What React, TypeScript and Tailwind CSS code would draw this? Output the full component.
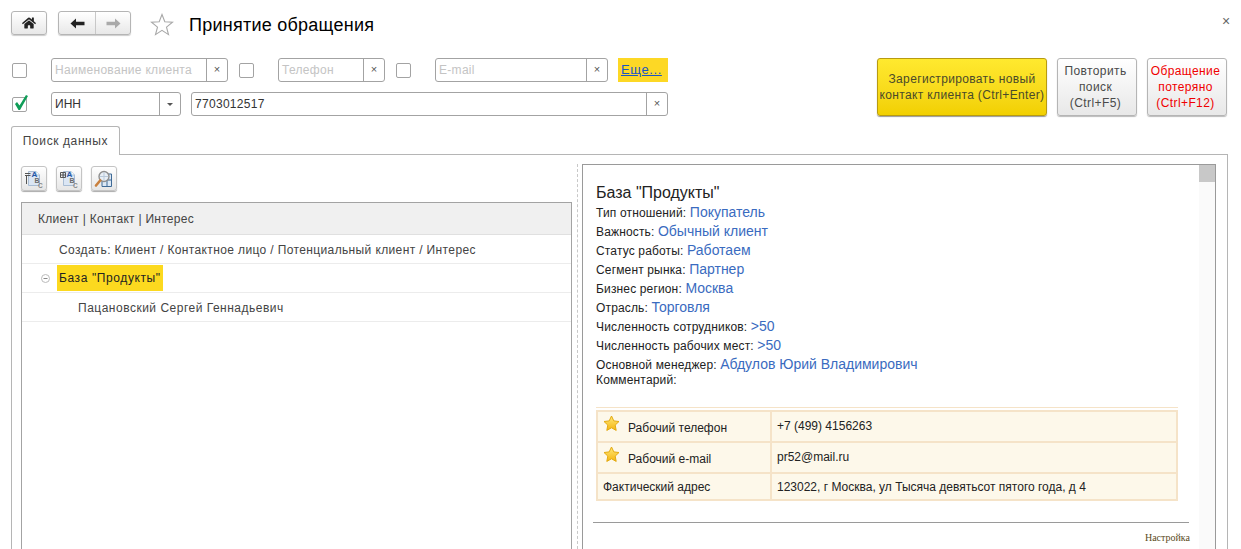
import { ReactNode } from "react";
import { FaHome } from "react-icons/fa";

const field = "flex h-[24px] items-center rounded-[3px] border border-[#a3a3a3] bg-white";

function Check({ checked = false }: { checked?: boolean }) {
  return (
    <div className="relative h-[15px] w-[15px] shrink-0 rounded-[2px] border border-[#a3a3a3] bg-white">
      {checked && (
        <svg className="absolute -left-[1px] -top-[5px]" width="18" height="19" viewBox="0 0 18 19">
          <path d="M3 11 L5 9 L7.5 12.5 L14 2 L16 3 L8 17 L6.5 17 Z" fill="#0f9d58" />
        </svg>
      )}
    </div>
  );
}

function ClearField({ width, placeholder, value }: { width: string; placeholder?: string; value?: string }) {
  return (
    <div className={`${field} ${width}`}>
      <div className={`flex-1 truncate pl-[3px] text-[12px] tracking-[0.3px] ${value ? "text-[#333]" : "text-[#c4c4c4]"}`}>
        {value ?? placeholder}
      </div>
      <div className="flex h-full w-[21px] items-center justify-center border-l border-[#a3a3a3] pb-[1px] text-[11px] text-[#555]">
        ×
      </div>
    </div>
  );
}

function SideButton({ children, red }: { children: ReactNode; red?: boolean }) {
  return (
    <div
      className={`flex h-[58px] w-[80px] items-center justify-center rounded-[3px] border border-[#b5b5b5] bg-gradient-to-b from-white to-[#e8e8e8] pr-[3px] text-center text-[12px] leading-[16px] tracking-[0.4px] shadow-[0_1px_1px_#bbb] ${
        red ? "text-[#f00000]" : "text-[#4a4a4a]"
      }`}
    >
      <div>{children}</div>
    </div>
  );
}

function ToolButton({ children }: { children: ReactNode }) {
  return (
    <div className="flex h-[25px] w-[26px] items-center justify-center rounded-[3px] border border-[#c4c4c4] bg-gradient-to-b from-white to-[#e6e6e6] shadow-[0_1px_1px_#aaa]">
      {children}
    </div>
  );
}

function DocIcon({ kind }: { kind: "list" | "grid" }) {
  return (
    <svg width="20" height="20" viewBox="0 0 20 20">
      <path d="M4.5 2.5 H12 L15.5 6 V16.5 H4.5 Z" fill="#dbe6f4" stroke="#a9bdd4" />
      <path d="M12 2.5 V6 H15.5" fill="#fff" stroke="#a9bdd4" />
      {kind === "list" ? (
        <path d="M1 4.5 H6.5 M1 6.5 H6.5 M2.5 6.5 V15" stroke="#555" strokeWidth="1" />
      ) : (
        <path d="M1.5 3.5 H6.5 V8.5 H1.5 Z M4 3.5 V8.5 M1.5 6 H6.5" stroke="#555" strokeWidth="1" fill="none" />
      )}
      <text x="7.5" y="7.5" fontSize="8" fontWeight="700" fill="#1f55a8" fontFamily="Liberation Sans">A</text>
      <text x="10.5" y="13.5" fontSize="7" fontWeight="700" fill="#6a6a6a" fontFamily="Liberation Sans">B</text>
      <text x="14" y="18.5" fontSize="6.5" fontWeight="700" fill="#8a8a8a" fontFamily="Liberation Sans">C</text>
    </svg>
  );
}

function Star() {
  return (
    <svg width="17" height="17" viewBox="0 0 17 17" className="shrink-0">
      <defs>
        <linearGradient id="st" x1="0" y1="0" x2="0" y2="1">
          <stop offset="0" stopColor="#ffe97a" />
          <stop offset="1" stopColor="#f5b50f" />
        </linearGradient>
      </defs>
      <path
        d="M8.5 1 L10.8 5.9 L16 6.5 L12.2 10.1 L13.2 15.4 L8.5 12.8 L3.8 15.4 L4.8 10.1 L1 6.5 L6.2 5.9 Z"
        fill="url(#st)"
        stroke="#e3a90f"
        strokeLinejoin="round"
      />
    </svg>
  );
}

function Info({ label, value }: { label: string; value: string }) {
  return (
    <div className="h-[19px] text-[12px] leading-[19px] tracking-[0.15px] text-[#222]">
      {label} <span className="text-[14px] tracking-normal text-[#3a6bc0]">{value}</span>
    </div>
  );
}

const info = [
  ["Тип отношений:", "Покупатель"],
  ["Важность:", "Обычный клиент"],
  ["Статус работы:", "Работаем"],
  ["Сегмент рынка:", "Партнер"],
  ["Бизнес регион:", "Москва"],
  ["Отрасль:", "Торговля"],
  ["Численность сотрудников:", ">50"],
  ["Численность рабочих мест:", ">50"],
  ["Основной менеджер:", "Абдулов Юрий Владимирович"],
];

const contacts = [
  { label: "Рабочий телефон", value: "+7 (499) 4156263", star: true, h: "h-[29px]", pad: "pb-[2px]" },
  { label: "Рабочий e-mail", value: "pr52@mail.ru", star: true, h: "h-[31px]", pad: "pb-[2px]" },
  { label: "Фактический адрес", value: "123022, г Москва, ул Тысяча девятьсот пятого года, д 4", star: false, h: "h-[27px]", pad: "" },
];

export default function App() {
  return (
    <div
      className="relative flex h-[549px] w-[1241px] flex-col overflow-hidden bg-white text-[#333]"
      style={{ fontFamily: '"Liberation Sans", Arial, sans-serif' }}
    >
      {/* шапка формы */}
      <div className="mt-[11px] flex h-[24px] items-center pl-[11px]">
        <div className="flex h-[24px] w-[36px] items-center justify-center rounded-[3px] border border-[#b5b5b5] bg-gradient-to-b from-white to-[#e8e8e8] shadow-[0_1px_1px_#ccc]">
          <FaHome size={14} color="#222" />
        </div>
        <div className="ml-[11px] flex h-[24px] w-[73px] rounded-[3px] border border-[#b5b5b5] bg-gradient-to-b from-white to-[#e8e8e8] shadow-[0_1px_1px_#ccc]">
          <div className="flex w-[37px] items-center justify-center border-r border-[#c8c8c8]">
            <svg width="15" height="11" viewBox="0 0 15 11">
              <path d="M0.5 5.5 L6 0.5 V3.8 H14.5 V7.2 H6 V10.5 Z" fill="#222" />
            </svg>
          </div>
          <div className="flex flex-1 items-center justify-center">
            <svg width="15" height="11" viewBox="0 0 15 11">
              <path d="M14.5 5.5 L9 0.5 V3.8 H0.5 V7.2 H9 V10.5 Z" fill="#aaa" />
            </svg>
          </div>
        </div>
        <svg className="ml-[19px] mt-[3px]" width="24" height="23" viewBox="0 0 24 23">
          <path
            d="M12 1.5 L14.8 8.8 L22.5 9.2 L16.5 14.1 L18.5 21.6 L12 17.4 L5.5 21.6 L7.5 14.1 L1.5 9.2 L9.2 8.8 Z"
            fill="none"
            stroke="#a8a8a8"
            strokeWidth="1.1"
          />
        </svg>
        <div className="ml-[15px] mt-[4px] text-[18px] tracking-[0.25px] text-black">Принятие обращения</div>
        <div className="absolute left-[1222px] top-[12px] text-[14px] leading-[18px] text-[#666]">×</div>
      </div>

      {/* отбор и команды */}
      <div className="mt-[23px] flex pl-[12px] pr-[14px]">
        <div className="flex w-[656px] flex-col gap-[10px]">
          <div className="flex h-[24px] items-center">
            <Check />
            <div className="ml-[24px]">
              <ClearField width="w-[177px]" placeholder="Наименование клиента" />
            </div>
            <div className="ml-[11px]">
              <Check />
            </div>
            <div className="ml-[24px]">
              <ClearField width="w-[107px]" placeholder="Телефон" />
            </div>
            <div className="ml-[11px]">
              <Check />
            </div>
            <div className="ml-[24px]">
              <ClearField width="w-[173px]" placeholder="E-mail" />
            </div>
            <div className="ml-[10px] flex h-[24px] w-[50px] items-center bg-[#fdd825] pl-[3px] text-[13px] tracking-[0.6px] text-[#1a56c4] underline">
              Еще...
            </div>
          </div>
          <div className="flex h-[24px] items-center">
            <Check checked />
            <div className={`${field} ml-[24px] w-[130px]`}>
              <div className="flex-1 pl-[3px] text-[12px] text-[#333]">ИНН</div>
              <div className="flex h-full w-[21px] items-center justify-center border-l border-[#a3a3a3]">
                <div className="h-0 w-0 border-x-[3px] border-t-[3px] border-x-transparent border-t-[#555]" />
              </div>
            </div>
            <div className="ml-[10px]">
              <ClearField width="w-[477px]" value="7703012517" />
            </div>
          </div>
        </div>
        <div className="ml-auto flex gap-[10px]">
          <div className="flex h-[58px] w-[170px] items-center justify-center rounded-[3px] border border-[#b89b10] bg-gradient-to-b from-[#ffe92e] to-[#f2d000] text-center text-[12px] leading-[16px] tracking-[0.35px] text-[#4a4a2a] shadow-[0_1px_1px_#999]">
            <div>
              Зарегистрировать новый
              <br />
              контакт клиента (Ctrl+Enter)
            </div>
          </div>
          <SideButton>
            Повторить
            <br />
            поиск
            <br />
            (Ctrl+F5)
          </SideButton>
          <SideButton red>
            Обращение
            <br />
            потеряно
            <br />
            (Ctrl+F12)
          </SideButton>
        </div>
      </div>

      {/* закладка */}
      <div className="mt-[10px] flex h-[29px] pl-[11px]">
        <div className="z-10 flex h-[29px] w-[109px] items-center justify-center rounded-t-[3px] border border-b-0 border-[#b5b5b5] bg-white text-[12px] tracking-[0.6px] text-[#444]">
          Поиск данных
        </div>
      </div>

      {/* панель закладки */}
      <div className="-mt-[1px] ml-[11px] flex h-0 w-[1217px] flex-1 border border-b-0 border-[#b5b5b5] pl-[9px] pt-[9px]">
        <div className="flex w-[551px] shrink-0 flex-col">
          <div className="flex gap-[9px] pt-[2px]">
            <ToolButton>
              <DocIcon kind="list" />
            </ToolButton>
            <ToolButton>
              <DocIcon kind="grid" />
            </ToolButton>
            <ToolButton>
              <svg width="20" height="20" viewBox="0 0 20 20">
                <path d="M8 5 H17.5 V17.5 H8 Z" fill="#dce8f5" stroke="#3f6a96" />
                <path d="M12 11 H17.5 M13 11 V17.5" stroke="#3f6a96" />
                <circle cx="10" cy="7.5" r="5" fill="#e8eff6" stroke="#8f8f8f" strokeWidth="1.4" />
                <path d="M6 7.5 H14 M10 3.5 V11" stroke="#b9c9da" />
                <path d="M6.2 11.5 L2 16.5" stroke="#c9803e" strokeWidth="2.6" strokeLinecap="round" />
              </svg>
            </ToolButton>
          </div>
          <div className="mt-[11px] flex-1 border border-b-0 border-[#a3a3a3] text-[12px] text-[#444]">
            <div className="flex h-[32px] items-center border-b border-[#e0e0e0] bg-[#f0f0f0] pl-[16px] tracking-[0.27px]">
              Клиент | Контакт | Интерес
            </div>
            <div className="flex h-[29px] items-center border-b border-[#ececec] pl-[37px] pt-[1px] tracking-[0.37px]">
              Создать: Клиент / Контактное лицо / Потенциальный клиент / Интерес
            </div>
            <div className="flex h-[29px] items-center border-b border-[#ececec] pl-[18px]">
              <svg width="11" height="11" viewBox="0 0 11 11">
                <circle cx="5.5" cy="5.5" r="4" fill="none" stroke="#bbb" />
                <path d="M3.5 5.5 H7.5" stroke="#888" />
              </svg>
              <div className="ml-[6px] flex h-[26px] w-[106px] items-center bg-[#fcd91f] pl-[2px] tracking-[0.6px] text-[#222]">
                База "Продукты"
              </div>
            </div>
            <div className="flex h-[29px] items-center border-b border-[#ececec] pl-[56px] pt-[1px] tracking-[0.5px]">
              Пацановский Сергей Геннадьевич
            </div>
          </div>
        </div>

        <div className="ml-[5px] mr-[4px] w-0 border-l border-dashed border-[#c8c8c8]" />

        {/* поле HTML */}
        <div className="flex w-[634px] shrink-0 border border-b-0 border-[#9a9a9a]">
          <div className="w-[616px] shrink-0 pl-[13px] pt-[18px]">
            <div className="h-[19px] text-[16px] leading-[19px] text-[#222]">База "Продукты"</div>
            <div className="mt-[1px]">
              {info.map(([label, value]) => (
                <Info key={label} label={label} value={value} />
              ))}
            </div>
            <div className="h-[14px] text-[12px] leading-[13px] tracking-[0.15px] text-[#222]">Комментарий:</div>
            <div className="mt-[19px] w-[582px] border-t border-[#f5e3c8] pt-[2px]">
              <div className="border-2 border-[#f5e3c8] bg-[#fdf8ea] text-[12px] text-[#222]">
                {contacts.map((c, i) => (
                  <div key={c.label} className={`flex ${c.h} ${i > 0 ? "border-t-2 border-[#f5e3c8]" : ""}`}>
                    <div className="flex w-[174px] items-center border-r-2 border-[#f5e3c8] pl-[5px]">
                      {c.star && (
                        <div className="-mt-[6px] mr-[8px]">
                          <Star />
                        </div>
                      )}
                      <div className={c.star ? "mt-[3px]" : ""}>{c.label}</div>
                    </div>
                    <div className={`flex flex-1 items-center pl-[5px] ${c.pad}`}>{c.value}</div>
                  </div>
                ))}
              </div>
            </div>
            <div className="-ml-[3px] mt-[21px] w-[596px] border-t border-[#9a9a9a]" />
            <div
              className="-ml-[3px] mt-[9px] w-[597px] text-right text-[10px] leading-[12px] text-[#5a4a1a]"
              style={{ fontFamily: '"Liberation Serif", serif' }}
            >
              Настройка
            </div>
          </div>
          <div className="flex-1 bg-[#fafafa]">
            <div className="h-[17px] bg-[#c8c8c8]" />
          </div>
        </div>
      </div>
    </div>
  );
}
